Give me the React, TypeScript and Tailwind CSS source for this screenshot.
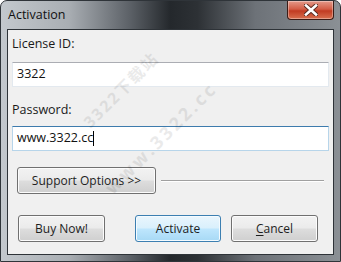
import React from 'react';

const btn =
  'h-[27px] rounded-[3px] border border-[#707070] bg-[linear-gradient(#f2f2f2_0%,#ebebeb_48%,#dddddd_52%,#cfcfcf_100%)] shadow-[inset_0_0_0_1px_#fcfcfc] text-[12px] text-[#1e1e1e] flex items-center justify-center';

export default function App() {
  return (
    <div
      className="relative w-[341px] h-[262px] overflow-hidden rounded-t-[7px] border border-[#2f3439] flex flex-col bg-[linear-gradient(90deg,#c3c8cd_0%,#a9aeb3_20%,#5c6167_38%,#24282c_50%,#2d3135_58%,#6d7278_75%,#8b9095_100%)]"
      style={{ fontFamily: '"Open Sans", "Noto Sans", sans-serif' }}
    >
      {/* title bar */}
      <div className="h-[28px] flex items-start shrink-0">
        <span className="pl-[7px] pt-[5px] text-[12.5px] text-[#111]">Activation</span>
        <div className="ml-auto mr-[6px] w-[47px] h-[19px] rounded-b-[4px] border border-t-0 border-[#3b1c16] bg-[linear-gradient(#e49a8a_0%,#d35d46_45%,#c13b22_55%,#d8704f_100%)] shadow-[inset_0_0_0_1px_rgba(255,255,255,0.35)] flex items-center justify-center">
          <svg width="14" height="12" viewBox="0 0 14 12">
            <path d="M2 1.5 L12 10.5 M12 1.5 L2 10.5" stroke="#5a2a20" strokeWidth="4.5" strokeLinecap="square" />
            <path d="M2 1.5 L12 10.5 M12 1.5 L2 10.5" stroke="#ffffff" strokeWidth="2.6" strokeLinecap="square" />
          </svg>
        </div>
      </div>

      {/* client area */}
      <div className="mx-[6px] mb-[6px] flex-1 border border-[#2e3338] bg-[#f0f0f0] relative flex flex-col px-[4px]">
        <div className="pt-[5px] text-[12.5px] text-[#1a1a1a] leading-[18px]">License ID:</div>
        <div className="mt-[9px] h-[25px] border border-[#e3e9ef] border-t-[#abadb3] bg-white flex items-center pl-[4px] text-[12.5px] text-[#111]">
          3322
        </div>
        <div className="mt-[14px] text-[12.5px] text-[#1a1a1a] leading-[18px]">Password:</div>
        <div className="mt-[7px] h-[25px] border border-[#b7d5ea] border-t-[#3d7bad] bg-white flex items-center pl-[4px] text-[12.5px] text-[#111]">
          <span>www.3322.cc</span>
          <span className="w-px h-[15px] bg-black" />
        </div>

        <div className="mt-[16px] flex items-center pl-[5px] pr-[5px]">
          <div className={btn + ' w-[139px]'}>Support Options &gt;&gt;</div>
          <div className="ml-[5px] flex-1 h-[2px] border-t border-[#a0a0a0] border-b border-b-white" />
        </div>

        <div className="mt-[21px] flex pl-[6px]">
          <div className={btn + ' w-[87px]'}>Buy Now!</div>
          <div className="ml-[30px] w-[86px] h-[27px] rounded-[3px] border border-[#3c7fb1] bg-[linear-gradient(#eaf6fd_0%,#d9f0fc_48%,#bee6fd_52%,#a7d9f5_100%)] shadow-[inset_0_0_0_1px_#f4fbff] text-[12px] text-[#1e1e1e] flex items-center justify-center">
            Activate
          </div>
          <div className={btn + ' ml-[10px] w-[87px]'}>
            <span className="underline underline-offset-2">C</span>ancel
          </div>
        </div>

        {/* watermark */}
        <div
          className="absolute left-[113px] top-[60px] -translate-x-1/2 -translate-y-1/2 -rotate-45 text-[16px] tracking-[2px] font-bold text-black opacity-[0.08] whitespace-nowrap pointer-events-none"
          style={{ fontFamily: '"Open Sans", "Noto Sans CJK SC", sans-serif' }}
        >
          3322下载站
        </div>
        <div className="absolute left-[153px] top-[108px] -translate-x-1/2 -translate-y-1/2 -rotate-45 text-[18px] tracking-[3px] font-bold text-black opacity-[0.08] whitespace-nowrap pointer-events-none">
          www.3322.cc
        </div>
      </div>
    </div>
  );
}
